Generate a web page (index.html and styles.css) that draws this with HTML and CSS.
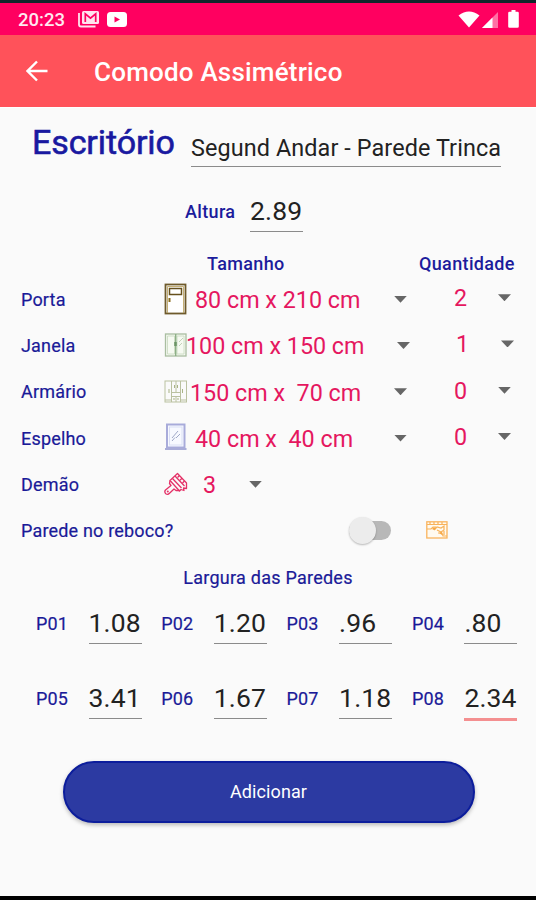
FILE: index.html
```html
<!DOCTYPE html>
<html lang="pt-BR">
<head>
<meta charset="utf-8">
<title>Comodo Assimétrico</title>
<link rel="stylesheet" href="styles.css">
</head>
<body>
<div class="screen">
  <div class="status">
    <span class="clock">20:23</span>
    <svg class="mail" width="22" height="18" viewBox="0 0 22 18"><path d="M1 3v11.500q0 2 2 2h14.500" fill="none" stroke="#ffe3ee" stroke-width="1.800"/><rect x="4" y="1" width="17" height="13" rx="1.500" fill="#ffe3ee"/><path d="M7.300 12V3.800l5.200 4.400 5.200-4.400V12" fill="none" stroke="#ff0060" stroke-width="1.700"/></svg>
    <svg class="tube" width="20" height="15" viewBox="0 0 20 15"><rect width="20" height="15" rx="3.500" fill="#fff"/><path d="M7.500 4.500v6l5.500-3z" fill="#ff0060"/></svg>
    <span class="grow"></span>
    <svg class="wifi" width="22" height="17" viewBox="0 0 22 17"><path d="M0.500 4.500Q11-3.500 21.500 4.500L11 16.500z" fill="#fff"/></svg>
    <svg class="signal" width="17" height="16" viewBox="0 0 17 16"><path d="M16 0v16H0z" fill="#ff6fa4"/><path d="M10.500 5.500V16H0z" fill="#fff"/></svg>
    <svg class="battery" width="11" height="18" viewBox="0 0 11 18"><path d="M3.500 0h4v1.800H9.500q1.300 0 1.300 1.300V16.500q0 1.300-1.300 1.300H1.500Q.2 17.800.2 16.500V3.100q0-1.300 1.300-1.300h2z" fill="#fff"/></svg>
  </div>
  <header class="appbar">
    <svg width="22" height="22" viewBox="0 0 22 22"><path d="M21.500 11H2M11 1.500L1.500 11l9.500 9.500" fill="none" stroke="#fff" stroke-width="2.400"/></svg>
    <h1>Comodo Assimétrico</h1>
  </header>
  <main>
    <div class="room">
      <h2>Escritório</h2>
      <div class="field name">Segund Andar - Parede Trinca</div>
    </div>
    <div class="height">
      <span class="strong altura">Altura</span>
      <div class="field num">2.89</div>
    </div>
    <div class="heads"><span></span><span class="strong">Tamanho</span><span class="strong qty-head">Quantidade</span></div>

    <div class="row">
      <span class="label">Porta</span>
      <svg class="icon" width="24" height="32" viewBox="0 0 24 32"><rect x="1.500" y="1.500" width="20" height="29" fill="#fff" stroke="#6e5a2b" stroke-width="1.800"/><path d="M3.500 30V3.500h16V30" fill="none" stroke="#b69c54" stroke-width=".8"/><rect x="5.500" y="5.500" width="12" height="6" fill="#fff" stroke="#66501c" stroke-width="1.500"/><path d="M5.500 15v4" stroke="#8a6c1d" stroke-width="2"/></svg>
      <span class="size">80 cm x 210 cm</span><i class="caret"></i>
      <span class="qty">2</span><i class="caret last"></i>
    </div>
    <div class="row wide">
      <span class="label">Janela</span>
      <svg class="icon" width="24" height="24" viewBox="0 0 24 24"><rect x="1.500" y="1" width="20.500" height="22" fill="#f6faf2" stroke="#a9bea0" stroke-width="1.300"/><path d="M3.500 3h7v18h-7zM13 3h7v18h-7z" fill="none" stroke="#c7d8bd" stroke-width=".8"/><path d="M11.700 1v22" stroke="#8db087" stroke-width="1.500"/><path d="M11.500 9v4" stroke="#6b9566" stroke-width="2.500"/><path d="M15 9l4-4M15 13l3-3" stroke="#b5c9aa" stroke-width=".8"/></svg>
      <span class="size">100 cm x 150 cm</span><i class="caret"></i>
      <span class="qty">1</span><i class="caret last"></i>
    </div>
    <div class="row mid">
      <span class="label">Armário</span>
      <svg class="icon" width="24" height="24" viewBox="0 0 24 24"><g fill="none" stroke="#bac1a0" stroke-width="1"><rect x="1" y="1" width="21.500" height="21"/><path d="M7.500 1v21M16.500 1v21M12 1v11M7.500 12.500h9M7.500 16.500h9M12 16.500V22M1 20h6M17 20h5"/></g><path d="M5 9v4M18.500 9v4M10.500 5v3M13.500 5v3M10 18v2M14 18v2" stroke="#a9b386"/></svg>
      <span class="size">150 cm x&nbsp; 70 cm</span><i class="caret"></i>
      <span class="qty">0</span><i class="caret last"></i>
    </div>
    <div class="row">
      <span class="label">Espelho</span>
      <svg class="icon mirror" width="24" height="28" viewBox="0 0 24 28"><rect x="3" y="1.500" width="17.500" height="23" fill="#f7f9ff" stroke="#a8abda" stroke-width="2"/><rect x="5.500" y="4" width="12.500" height="18" fill="none" stroke="#dadff5"/><path d="M1 26h21.500" stroke="#a9acd8" stroke-width="2"/><path d="M8 15l6-7M8 18l3-3.500M12 15l4-4" stroke="#9fa8c8" stroke-width="1"/></svg>
      <span class="size">40 cm x&nbsp; 40 cm</span><i class="caret"></i>
      <span class="qty">0</span><i class="caret last"></i>
    </div>
    <div class="row coat">
      <span class="label">Demão</span>
      <svg class="icon" width="24" height="24" viewBox="0 0 24 24"><g fill="none" stroke="#e43268" stroke-width="1.300" stroke-linejoin="round"><path d="M6 8.500L13.500 1.500 22.500 11v5.500l-3-.5.500 2.500-3-1-1.500 1.500z"/><path d="M8.500 6.500l9 9.500M11 4l9.500 10M6 8.500l-.5 3 1.500 2L1.500 18q-1.500 2 .3 3.700 2 1.500 3.700-.4L10 17l2 1.500 3.500 0"/><path d="M13.500 5.500l2-2M16 8.300l2-2M18.500 11l2-2"/></g><circle cx="3.800" cy="19.500" r="1" fill="#e43268"/></svg>
      <span class="size">3</span><i class="caret"></i>
    </div>
    <div class="row">
      <span class="label question">Parede no reboco?</span>
      <span class="switch"><span class="thumb"></span></span>
      <svg class="wall" width="22" height="18" viewBox="0 0 22 18"><rect x=".8" y=".8" width="20.200" height="16.200" fill="#fffaf0" stroke="#f9b45e" stroke-width="1.300"/><path d="M1 3.500h20M4 1v2M8 1v2M12 1v2M16 1v2M1 8h4l2-2h3M8 9l3-3 4 1 3-2v4l-3 2-4-2M12 12h4l1 3h4M18 10v4" fill="none" stroke="#f8b25a" stroke-width="1.200"/><path d="M6 8l2-2 2 2-2 1zM13 12l3-1v3z" fill="#f6a746"/></svg>
    </div>
    <div class="caption">Largura das Paredes</div>
    <div class="walls">
      <div class="cell"><span>P01</span><div class="field num">1.08</div></div>
      <div class="cell"><span>P02</span><div class="field num">1.20</div></div>
      <div class="cell"><span>P03</span><div class="field num">.96</div></div>
      <div class="cell"><span>P04</span><div class="field num">.80</div></div>
      <div class="cell"><span>P05</span><div class="field num">3.41</div></div>
      <div class="cell"><span>P06</span><div class="field num">1.67</div></div>
      <div class="cell"><span>P07</span><div class="field num">1.18</div></div>
      <div class="cell"><span>P08</span><div class="field num active">2.34</div></div>
    </div>
    <button class="add" type="button">Adicionar</button>
  </main>
</div>
</body>
</html>
```
FILE: styles.css
```css
* { box-sizing: border-box; }
body { margin: 0; font-family: Roboto, "Liberation Sans", sans-serif; background: #fafafa; }
.screen { width: 536px; height: 900px; display: flex; flex-direction: column; border-top: 3px solid #10262b; border-bottom: 4px solid #000; background: #fafafa; overflow: hidden; white-space: nowrap; }
svg { display: block; flex: none; }
.status { height: 32px; flex: none; display: flex; align-items: center; padding: 0 17px 0 18px; background: #ff0060; color: #ffe9f0; }
.clock { width: 60px; font-size: 18.500px; font-weight: 500; line-height: 32px; padding-top: 2px; }
.tube { margin-left: 7px; }
.grow { flex: 1; }
.signal { margin: 2px 9px 0 2px; }
.appbar { height: 72px; flex: none; display: flex; align-items: center; padding-left: 26px; background: #ff525a; color: #fff; }
.appbar h1 { margin: 2px 0 0 46px; font-size: 26px; letter-spacing: .2px; font-weight: 500; line-height: 30px; }
main { flex: 1; display: flex; flex-direction: column; border-top: 1px solid #fff; }
.room { height: 71px; flex: none; display: flex; padding-left: 32px; }
h2 { margin: 14px 0 0; width: 159px; font-size: 34px; letter-spacing: -.1px; line-height: 40px; font-weight: 400; color: #1919a0; -webkit-text-stroke: .6px #1919a0; }
.field { border-bottom: 1px solid #8b8b8b; color: #222; }
.name { width: 310px; height: 39px; margin-top: 20px; font-size: 23.400px; letter-spacing: .1px; line-height: 41px; }
.height { height: 64px; flex: none; display: flex; padding-left: 185px; }
.strong { font-size: 18px; letter-spacing: .35px; font-weight: 500; color: #1c1c9c; line-height: 22px; }
.altura { width: 65px; padding-top: 22px; }
.num { width: 53px; height: 43px; font-size: 26.500px; letter-spacing: .15px; line-height: 31px; padding-top: 7px; }
.height .num { margin-top: 10px; padding-top: 6px; }
.heads { height: 33px; flex: none; display: grid; grid-template-columns: 207px 212px auto; padding-top: 10px; }
.row { height: 46.300px; flex: none; display: flex; align-items: center; padding-left: 21px; color: #e5175f; font-size: 23.300px; }
.label { width: 143px; font-size: 18px; letter-spacing: .18px; color: #1a1a98; -webkit-text-stroke: .2px #1a1a98; }
.icon { width: 24px; }
.mirror { margin-top: -2px; }
.size { width: 198px; margin-left: 7px; padding-top: 2px; }
.wide .size { width: 210px; margin-left: -2px; }
.mid .size { width: 203px; margin-left: 2px; }
.caret { width: 13px; height: 7px; flex: none; background: #666; clip-path: polygon(0 0, 100% 0, 50% 100%); margin: 0 -1px 0 1px; }
.qty { width: 44px; margin: -2px 0 0 48px; }
.wide .qty { margin-left: 47px; width: 45px; }
.row .caret.last { margin: -3px 0 0; }
.coat .size { width: 45px; margin-left: 15px; }
.question { width: 328px; }
.switch { width: 42px; height: 19px; margin-left: 0; display: flex; align-items: center; background: #b8b8b8; border-radius: 10px; }
.thumb { width: 27px; height: 27px; flex: none; border-radius: 50%; background: #ececec; box-shadow: 0 1px 2px #0004; }
.wall { margin: -2px 0 0 35px; }
.caption { height: 46px; flex: none; line-height: 47px; text-align: center; font-size: 18px; letter-spacing: .25px; color: #1a1a98; -webkit-text-stroke: .2px #1a1a98; }
.walls { flex: none; display: grid; grid-template-columns: repeat(4, 125.300px); grid-auto-rows: 75.500px; padding: 1px 0 0 36px; }
.cell { display: flex; }
.cell > span { width: 52.500px; padding-top: 12px; font-size: 18px; letter-spacing: .15px; line-height: 22px; color: #1a1a98; -webkit-text-stroke: .2px #1a1a98; }
.cell .num { padding-top: 6px; }
.cell .active { height: 45px; border-bottom: 3px solid #f48f90; }
.add { width: 412px; height: 62px; flex: none; margin: 9px 0 0 62.500px; padding-bottom: 0; border: 2px solid #0c1d9c; border-radius: 31px; background: #2c3aa2; color: #fff; font: 400 18px/22px Roboto, "Liberation Sans", sans-serif; letter-spacing: .1px; box-shadow: 0 2px 4px #0004; }
```
